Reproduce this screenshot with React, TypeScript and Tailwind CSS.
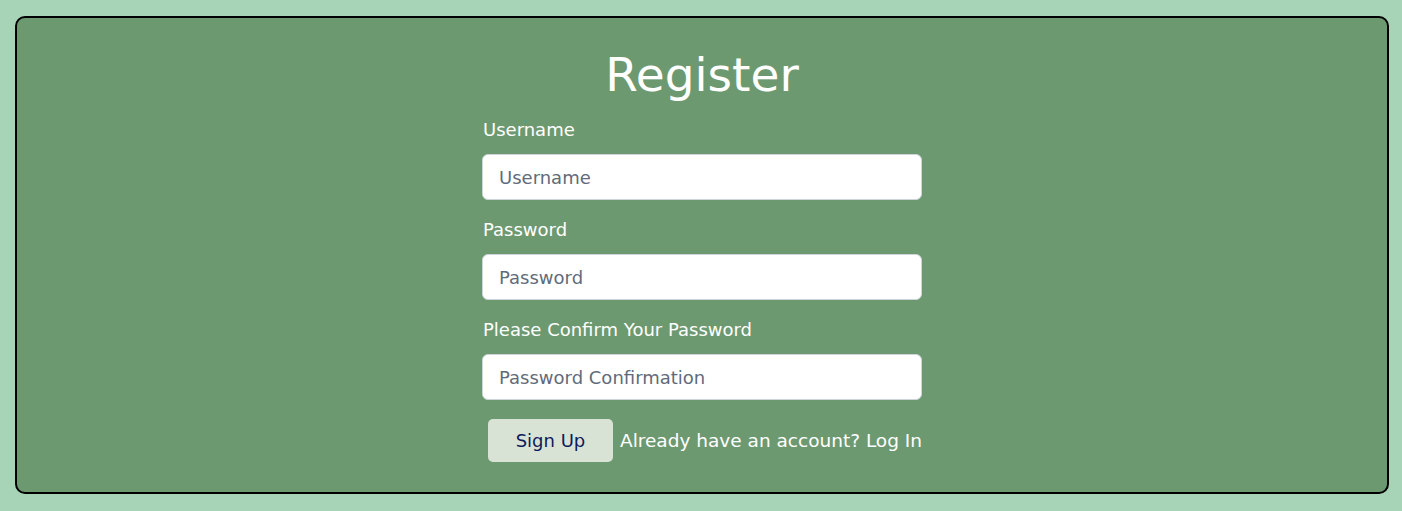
import React from "react";

export default function App() {
  const font = { fontFamily: '"DejaVu Sans", sans-serif' };
  return (
    <div className="w-[1402px] h-[511px] bg-[#a7d3b7] pt-[16px] pl-[15px] pr-[13px]" style={font}>
      <div className="h-[478px] rounded-[10px] border-2 border-black bg-[#6d9971] flex flex-col items-center">
        <h1 className="mt-[29px] h-[56px] leading-[56px] text-[47px] text-white">Register</h1>
        <form className="w-[440px] flex flex-col mt-[15px]" onSubmit={(e) => e.preventDefault()}>
          <Field label="Username" placeholder="Username" type="text" />
          <Field label="Password" placeholder="Password" type="password" />
          <Field label="Please Confirm Your Password" placeholder="Password Confirmation" type="password" />
          <div className="flex justify-end items-center gap-[7px] mt-[1px]">
            <button className="h-[43px] w-[125px] rounded-[5px] bg-[#d9e3d5] text-[#0d1b5c] text-[18px]">Sign Up</button>
            <span className="text-white text-[18.5px]">Already have an account? Log In</span>
          </div>
        </form>
      </div>
    </div>
  );
}

function Field({ label, placeholder, type }: { label: string; placeholder: string; type: string }) {
  return (
    <div className="flex flex-col mb-[18px]">
      <label className="text-white text-[18px] leading-[24px] pl-[1px]">{label}</label>
      <input
        type={type}
        placeholder={placeholder}
        className="mt-[12px] h-[46px] w-full rounded-[6px] border border-[#ced4da] bg-white px-[16px] text-[18px] placeholder:text-[#5f6b7a] outline-none"
      />
    </div>
  );
}
